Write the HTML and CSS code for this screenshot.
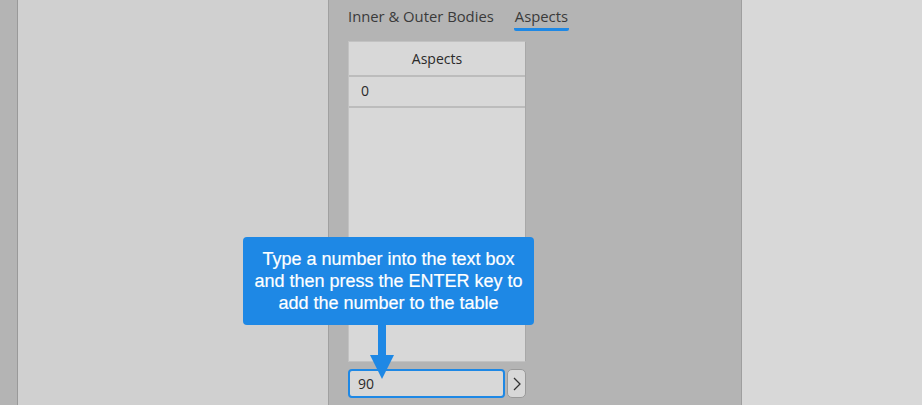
FILE: index.html
```html
<!DOCTYPE html>
<html>
<head>
<meta charset="utf-8">
<link rel="stylesheet" href="styles.css">
</head>
<body>
<div class="app">
  <div class="strip"></div>
  <div class="side"></div>
  <div class="main">
    <div class="tabs">
      <span class="tab">Inner &amp; Outer Bodies</span>
      <span class="tab active">Aspects</span>
    </div>
    <div class="table">
      <div class="th">Aspects</div>
      <div class="td">0</div>
      <div class="tbody"></div>
    </div>
    <div class="entry">
      <div class="input">90</div>
      <div class="btn"><svg width="10" height="16" viewBox="0 0 10 16"><path d="M2 2 L8 8 L2 14" fill="none" stroke="#333" stroke-width="1.3"/></svg></div>
    </div>
  </div>
  <div class="right"></div>
</div>
<div class="tip">
  <div class="tip-box">Type a number into the text box<br>and then press the ENTER key to<br>add the number to the table</div>
  <div class="tip-stem"></div>
  <div class="tip-head"></div>
</div>
</body>
</html>
```
FILE: styles.css
```css
html, body { margin: 0; padding: 0; }
body { width: 922px; height: 405px; overflow: hidden; font-family: "Open Sans", "Noto Sans", sans-serif; position: relative; }
.app { display: flex; height: 405px; }
.strip { width: 17px; background: #b4b4b4; border-right: 1px solid #999999; }
.side { width: 310px; background: #d0d0d0; border-right: 1px solid #a0a0a0; }
.main { width: 413px; background: #b4b4b4; border-right: 1px solid #9e9e9e; padding-left: 19px; box-sizing: border-box; display: flex; flex-direction: column; }
.right { flex: 1; background: #d8d8d8; }
.tabs { display: flex; gap: 20px; height: 41px; padding-top: 5px; box-sizing: border-box; font-size: 14.8px; color: #3a3a3a; }
.tab { height: 26px; line-height: 22px; box-sizing: border-box; }
.tab.active { border-bottom: 3px solid #1e88e5; border-radius: 2px; padding: 0 1px; }
.table { width: 178px; height: 321px; background: #d8d8d8; border: 1px solid #c2c2c2; border-right-color: #a8a8a8; box-sizing: border-box; display: flex; flex-direction: column; }
.th { height: 35px; border-bottom: 2px solid #bcbcbc; box-sizing: border-box; text-align: center; line-height: 33px; font-size: 14px; color: #2a2a2a; }
.td { height: 31px; border-bottom: 2px solid #bcbcbc; box-sizing: border-box; padding-left: 12px; line-height: 28px; font-size: 14px; color: #2a2a2a; }
.tbody { flex: 1; }
.entry { display: flex; gap: 2px; margin-top: 7px; }
.input { width: 157px; height: 29px; border: 2px solid #1e88e5; border-radius: 4px; background: #d8d8d8; box-sizing: border-box; padding-left: 8px; line-height: 25px; font-size: 14px; color: #2a2a2a; }
.btn { width: 19px; height: 29px; border: 1px solid #9a9a9a; border-radius: 5px; background: #d8d8d8; box-sizing: border-box; display: flex; align-items: center; justify-content: center; }
.tip { position: absolute; left: 243px; top: 237px; width: 291px; display: flex; flex-direction: column; align-items: center; }
.tip-box { width: 291px; height: 88px; background: #1e88e5; border-radius: 4px; box-sizing: border-box; color: #ffffff; font-family: "Liberation Sans", Arial, sans-serif; font-size: 18px; line-height: 22px; text-align: center; padding-top: 11px; -webkit-text-stroke: 0.2px #ffffff; }
.tip-stem { width: 8px; height: 30px; background: #1e88e5; margin-left: -14px; }
.tip-head { width: 0; height: 0; border-left: 12px solid transparent; border-right: 12px solid transparent; border-top: 24px solid #1e88e5; margin-left: -14px; }
```
